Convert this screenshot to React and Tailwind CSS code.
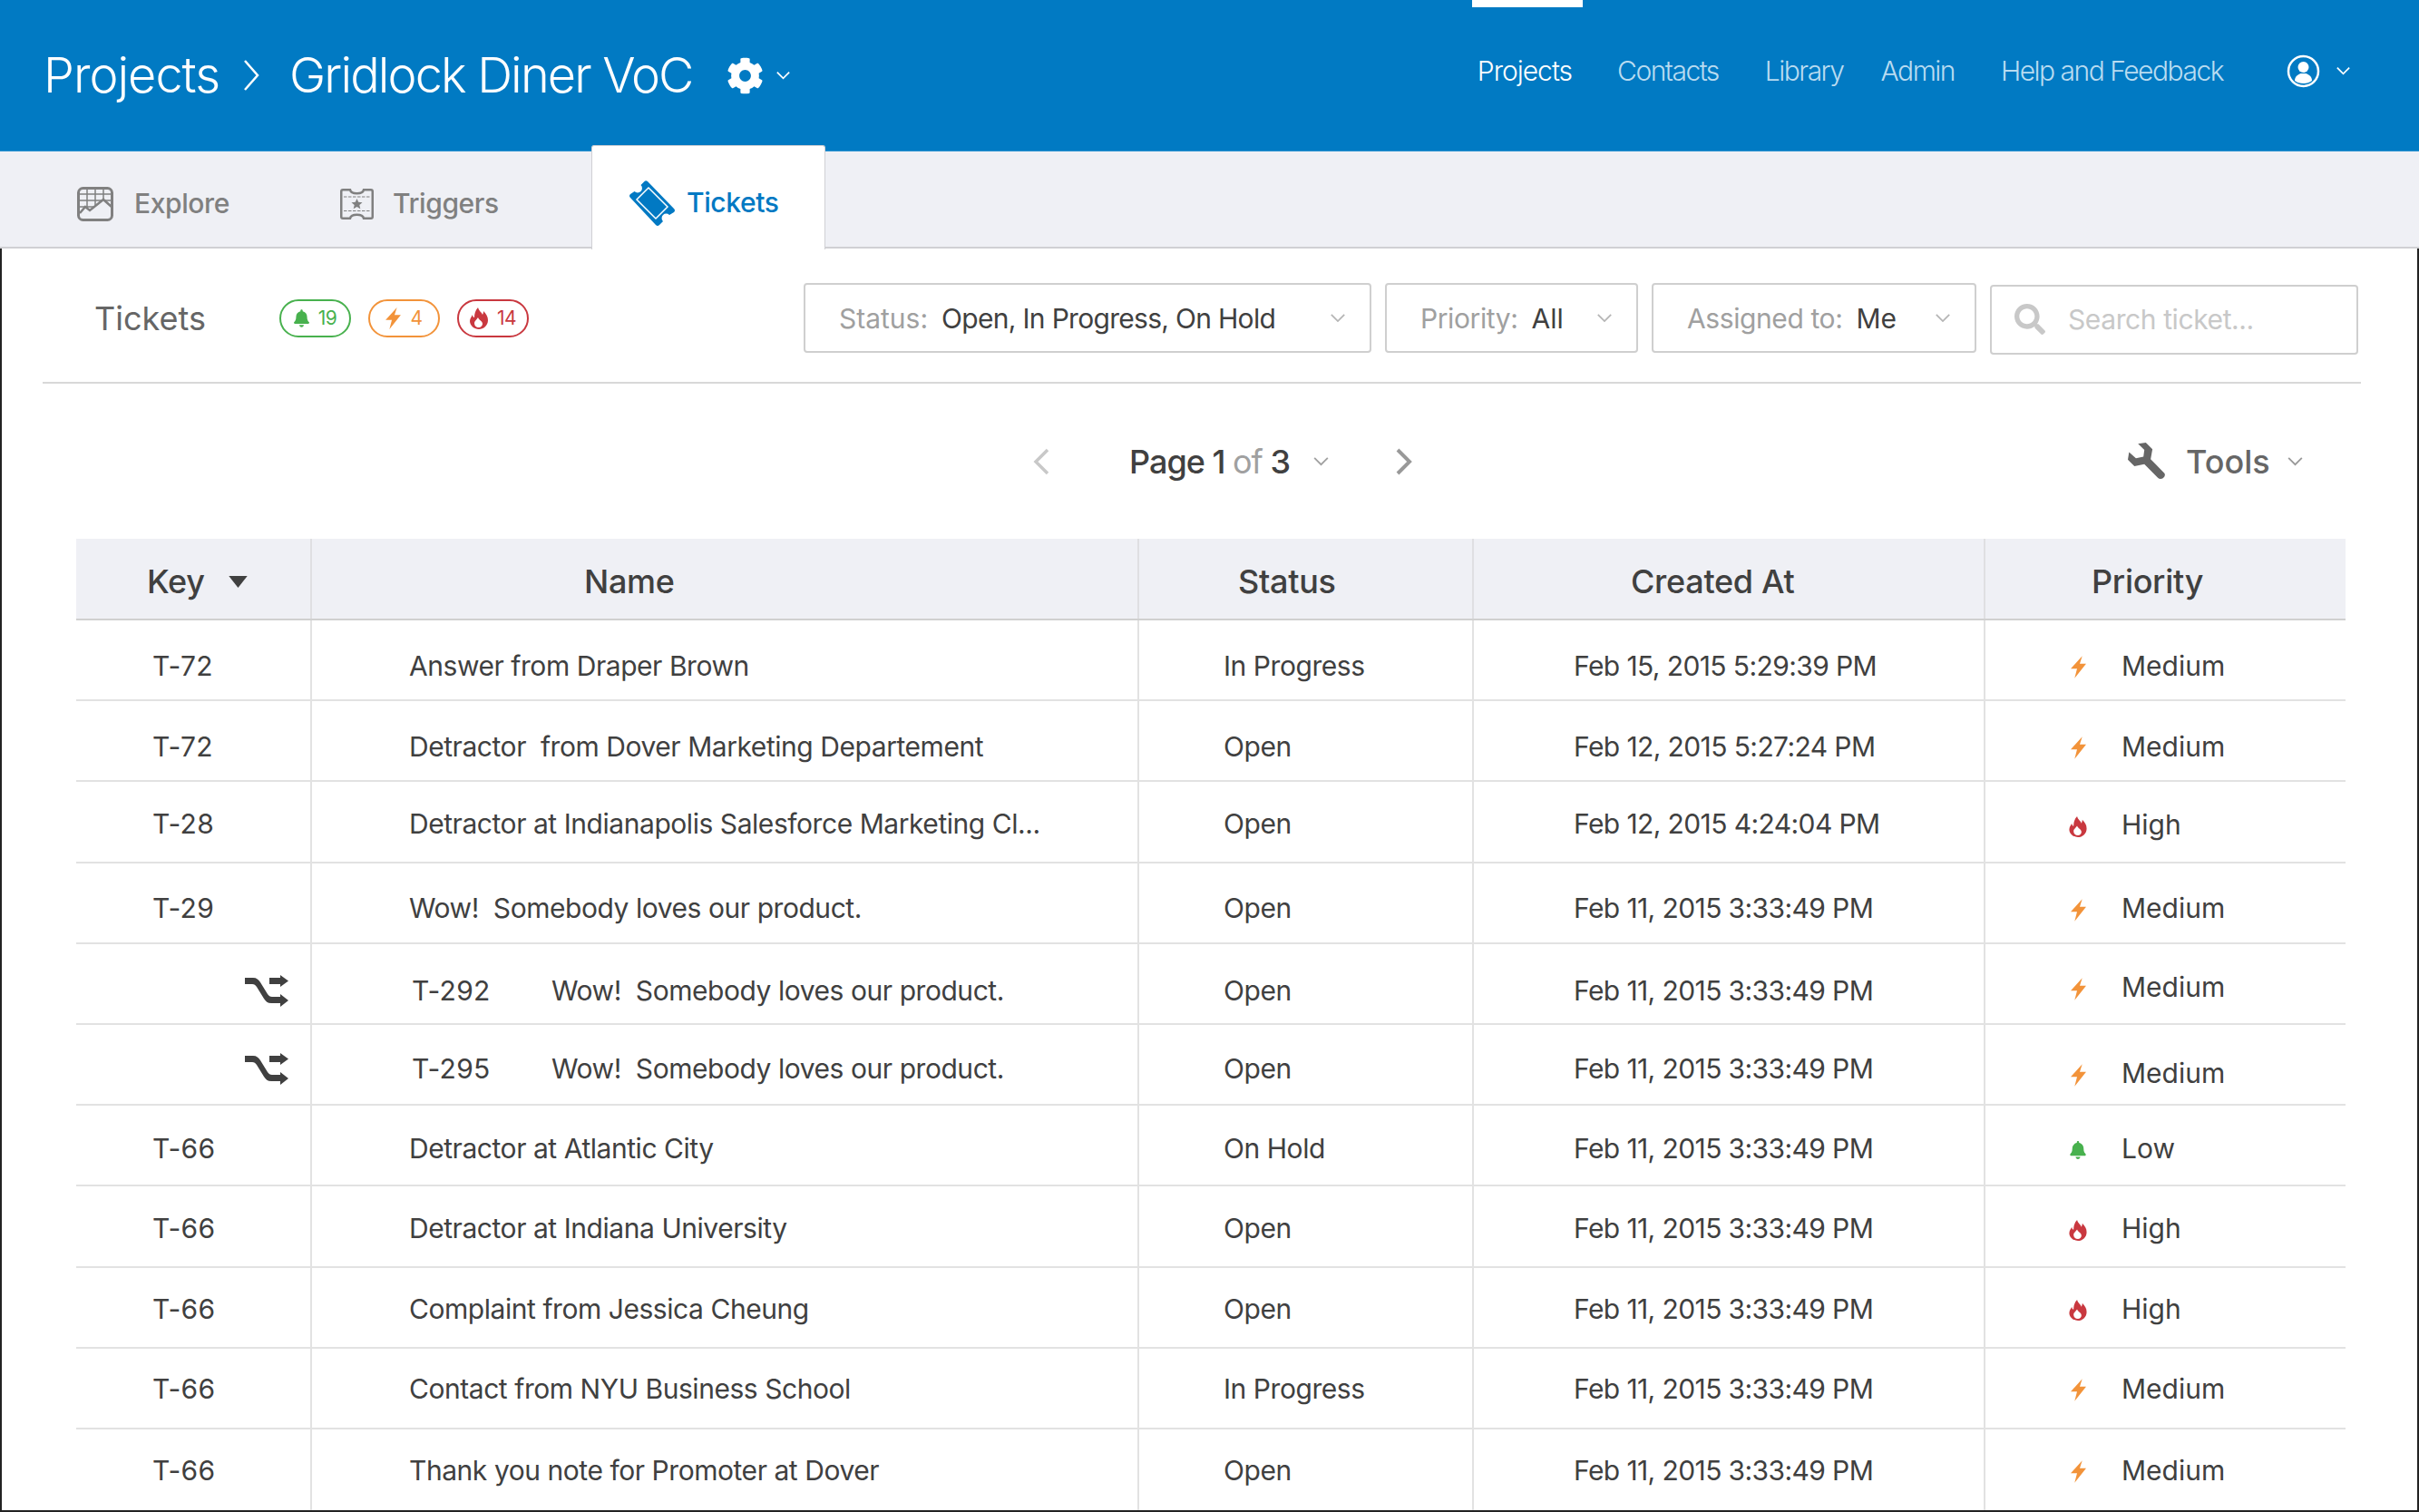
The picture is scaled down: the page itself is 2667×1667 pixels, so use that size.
import { FaBell, FaCog, FaSearch } from 'react-icons/fa'

const rows = [
  { key: 'T-72', name: 'Answer from Draper Brown', status: 'In Progress', created: 'Feb 15, 2015 5:29:39 PM', priority: 'Medium', pad: 'pt-[13px]', prioPad: 'pt-[13px]' },
  { key: 'T-72', name: 'Detractor\u00a0 from Dover Marketing Departement', status: 'Open', created: 'Feb 12, 2015 5:27:24 PM', priority: 'Medium', pad: 'pt-[13px]', prioPad: 'pt-[13px]' },
  { key: 'T-28', name: 'Detractor at Indianapolis Salesforce Marketing Cl...', status: 'Open', created: 'Feb 12, 2015 4:24:04 PM', priority: 'High', pad: 'pt-[6px]', prioPad: 'pt-[8px]' },
  { key: 'T-29', name: 'Wow!\u00a0 Somebody loves our product.', status: 'Open', created: 'Feb 11, 2015 3:33:49 PM', priority: 'Medium', pad: 'pt-[13px]', prioPad: 'pt-[13px]' },
  { child: 'T-292', name: 'Wow!\u00a0 Somebody loves our product.', status: 'Open', created: 'Feb 11, 2015 3:33:49 PM', priority: 'Medium', pad: 'pt-[16px]', prioPad: 'pt-[9px]' },
  { child: 'T-295', name: 'Wow!\u00a0 Somebody loves our product.', status: 'Open', created: 'Feb 11, 2015 3:33:49 PM', priority: 'Medium', pad: 'pt-[9px]', prioPad: 'pt-[20px]' },
  { key: 'T-66', name: 'Detractor at Atlantic City', status: 'On Hold', created: 'Feb 11, 2015 3:33:49 PM', priority: 'Low', pad: 'pt-[7px]', prioPad: 'pt-[7px]' },
  { key: 'T-66', name: 'Detractor at Indiana University', status: 'Open', created: 'Feb 11, 2015 3:33:49 PM', priority: 'High', pad: 'pt-[6px]', prioPad: 'pt-[6px]' },
  { key: 'T-66', name: 'Complaint from Jessica Cheung', status: 'Open', created: 'Feb 11, 2015 3:33:49 PM', priority: 'High', pad: 'pt-[4px]', prioPad: 'pt-[4px]' },
  { key: 'T-66', name: 'Contact from NYU Business School', status: 'In Progress', created: 'Feb 11, 2015 3:33:49 PM', priority: 'Medium', pad: 'pt-[2px]', prioPad: 'pt-[2px]' },
  { key: 'T-66', name: 'Thank you note for Promoter at Dover', status: 'Open', created: 'Feb 11, 2015 3:33:49 PM', priority: 'Medium', pad: 'pt-[2px]', prioPad: 'pt-[2px]' },
]

function Chevron({ className }) {
  return (
    <svg viewBox="0 0 20 12" className={className} fill="none" stroke="currentColor" strokeWidth="2">
      <path d="M2 2l8 8 8-8" />
    </svg>
  )
}

function Bolt({ className }) {
  return (
    <svg viewBox="0 0 17 24.300" className={className} fill="currentColor">
      <path d="M12.700 0L0 14h7L4.300 24.300 17 8.300h-7z" />
    </svg>
  )
}

function Flame({ className }) {
  return (
    <svg viewBox="0 0 20 24" className={className} fill="currentColor">
      <path
        fillRule="evenodd"
        d="M9 0c1 4 4 5 5 8 1-2 1-3 1-4 3 3 5 6 5 10 0 6-5 10-10 10S0 20 0 15c0-3 2-5 3-7 0 2 1 3 2 3 0-4 1-8 4-11zM10 22c-3 0-5-2-5-5 0-2 2-3 4-6 1 3 5 4 5 7 0 2-2 4-4 4z"
      />
    </svg>
  )
}

function Wrench({ className }) {
  return (
    <svg viewBox="48 48 127 124" className={className} fill="currentColor">
      <path d="M82 52l26-4 22 22-6 33 46 47q5 10-5 17-10 5-17-2l-45-45-33 7-22-22 4-25 23 20 25-5 3-23z" />
    </svg>
  )
}

function Shuffle() {
  return (
    <svg viewBox="0 0 48 35" className="w-[48px] h-[35px] text-[#404040]" fill="currentColor">
      <path d="M0 3h9c4 0 6 2 8 5l8 13c1.500 2 2.500 3 5 3h9v7H29c-4 0-6-2-8-5L13 13c-1.500-2-2.500-3-5-3H0z" />
      <path d="M27 3h12V0l9 6.500-9 6.500V10H27z" />
      <path d="M39 21l9 7-9 7z" />
    </svg>
  )
}

function ExploreIcon() {
  return (
    <svg viewBox="0 0 40 38" className="w-[40px] h-[38px] text-[#808080]" fill="none" stroke="currentColor">
      <path d="M2 8h36M2 15h36M2 22h36M11 2v24M20 2v20M29 2v14" strokeWidth="1.500" />
      <path d="M3 29l6-7 5 4 15-12 9 8v13H3z" fill="#eff0f5" stroke="none" />
      <path d="M3 29l6-7 5 4 15-12 9 8" strokeWidth="2.500" />
      <rect x="1.500" y="1.500" width="37" height="35" rx="5" strokeWidth="3" />
    </svg>
  )
}

function TriggersIcon() {
  return (
    <svg viewBox="0 0 37 34" className="w-[37px] h-[34px] text-[#808080]" fill="none" stroke="currentColor">
      <path d="M3 1.250h8c.500 2.500 3 4 7.500 4s7-1.500 7.500-4h8A1.750 1.750 0 0135.750 3v28A1.750 1.750 0 0134 32.750h-8c-.500-2.500-3-4-7.500-4s-7 1.500-7.500 4H3A1.750 1.750 0 011.250 31V3A1.750 1.750 0 013 1.250z" strokeWidth="2.500" />
      <path d="M4 9h29M4 24.500h29" strokeWidth="1" strokeDasharray="3.500 1.500" />
      <path d="M18.500 11l1.700 3.800 4.300.4-3.200 2.800 1 4.200-3.800-2.200-3.800 2.200 1-4.200-3.200-2.800 4.300-.4z" fill="currentColor" stroke="none" />
    </svg>
  )
}

function TicketsIcon() {
  return (
    <svg viewBox="0 0 50 50" className="w-[50px] h-[50px] text-[#0179c3]">
      <path d="M20 1l29 30q2 2 0 4l-5 3a4.500 4.500 0 00-7 7l-4 4q-2 2-4 0L1 19q-2-2 0-4l4.500-3a4.500 4.500 0 007-7L16 1.500q2-2 4-.500z" fill="currentColor" />
      <path d="M21 8l21 21-13 13L8 21z" fill="none" stroke="#fff" strokeWidth="1.500" />
    </svg>
  )
}

function UserIcon() {
  return (
    <svg viewBox="0 0 37 37" className="w-[37px] h-[37px] text-white">
      <circle cx="18.500" cy="18.500" r="16.500" fill="none" stroke="currentColor" strokeWidth="2.500" />
      <circle cx="18.500" cy="14" r="6" fill="currentColor" />
      <path d="M9 29c0-5 4-7 6.500-8h6c2.500 1 6.500 3 6.500 8-2.500 2-6 3-9.500 3S11.500 31 9 29z" fill="currentColor" />
    </svg>
  )
}

function PriorityIcon({ priority }) {
  if (priority === 'Low') return <FaBell className="w-[18px] h-[20px] text-[#48b14e]" />
  if (priority === 'High') return <Flame className="w-[20px] h-[23px] text-[#c9383f]" />
  return <Bolt className="w-[17px] h-[25px] text-[#f2933a]" />
}

function Pill({ color, icon, count }) {
  return (
    <div className={`flex items-center justify-center gap-[10px] w-[79px] h-[42px] rounded-[21px] border-2 text-[21px] tracking-[-0.5px] ${color}`}>
      {icon}
      <span>{count}</span>
    </div>
  )
}

function Filter({ label, value, width, labelClass, valueClass }) {
  return (
    <div className={`flex items-center justify-between h-[77px] pl-[37px] pr-[26px] border-2 border-[#cfcfcf] rounded-[4px] text-[30px] ${width}`}>
      <div className="whitespace-nowrap pt-[3px]">
        <span className={`text-[#a0a0a0] ${labelClass}`}>{label}:</span>
        <span className={`ml-[15px] text-[#404040] ${valueClass}`}>{value}</span>
      </div>
      <Chevron className="w-[18px] h-[11px] text-[#b5b5b5]" />
    </div>
  )
}

function App() {
  return (
    <div className="relative w-[2667px] h-[1667px] overflow-hidden bg-white font-['Inter',sans-serif] text-[#404040]">
      <header className="flex items-center justify-between h-[167px] bg-[#017ac3] border-b border-[#2f94d0] text-white font-light">
        <div className="flex items-center pl-[48px] text-[54px] leading-none">
          <span className="tracking-[-1px]">Projects</span>
          <svg viewBox="0 0 18 36" className="w-[18px] h-[36px] ml-[26px] mr-[33px]" fill="none" stroke="currentColor" strokeWidth="2.500"><path d="M2 2l14 16L2 34" /></svg>
          <span className="tracking-[-1.850px]">Gridlock Diner VoC</span>
          <FaCog className="w-[41px] h-[41px] ml-[37px]" />
          <Chevron className="w-[17px] h-[10px] ml-[13px]" />
        </div>
        <nav className="relative flex items-center text-[30px] tracking-[-1.500px] text-[#b9dcf1] pr-[75px] pb-[10px]">
          <div className="absolute left-[-6px] top-[-57px] w-[122px] h-[9px] bg-white" />
          <span className="text-white mr-[50px] tracking-[-1px]">Projects</span>
          <span className="mr-[51px]">Contacts</span>
          <span className="mr-[41px]">Library</span>
          <span className="mr-[51px]">Admin</span>
          <span className="mr-[70px]">Help and Feedback</span>
          <UserIcon />
          <Chevron className="w-[17px] h-[10px] ml-[17px] text-white" />
        </nav>
      </header>

      <div className="flex h-[107px] bg-[#eff0f5] border-b-2 border-[#d0d0d4] text-[30px] font-medium text-[#808080] tracking-[-0.400px]">
        <div className="flex items-center gap-[23px] pl-[85px] pt-[10px] w-[375px]">
          <ExploreIcon />
          <span>Explore</span>
        </div>
        <div className="flex items-center gap-[21px] pt-[10px] w-[277px]">
          <TriggersIcon />
          <span>Triggers</span>
        </div>
        <div className="relative flex items-center gap-[13px] w-[258px] h-[115px] mt-[-7px] pl-[41px] pt-[11px] bg-white border-x border-t border-[#d0d0d4] rounded-t-[3px] text-[#0179c3]">
          <TicketsIcon />
          <span>Tickets</span>
        </div>
      </div>

      <main className="h-[1393px] border-x-2 border-b-2 border-[#222]">
        <div className="flex items-center h-[149px] pt-[7px] ml-[45px] mr-[62px] border-b-2 border-[#d8d8d8]">
          <span className="ml-[57px] w-[204px] text-[36px] text-[#666]">Tickets</span>
          <div className="flex gap-[19px] w-[578px]">
            <Pill color="border-[#48b14e] text-[#48b14e]" count="19" icon={<FaBell className="w-[17px] h-[20px]" />} />
            <Pill color="border-[#f2933a] text-[#f2933a]" count="4" icon={<Bolt className="w-[17px] h-[24px]" />} />
            <Pill color="border-[#c9383f] text-[#c9383f]" count="14" icon={<Flame className="w-[20px] h-[24px]" />} />
          </div>
          <div className="flex gap-[15px]">
            <Filter label="Status" value="Open, In Progress, On Hold" width="w-[626px]" labelClass="" valueClass="tracking-[-0.700px]" />
            <Filter label="Priority" value="All" width="w-[279px]" labelClass="tracking-[-0.400px]" valueClass="" />
            <Filter label="Assigned to" value="Me" width="w-[358px]" labelClass="tracking-[-0.400px]" valueClass="" />
            <div className="flex items-center gap-[25px] w-[406px] h-[77px] mt-[2px] pl-[25px] border-2 border-[#cfcfcf] rounded-[4px] text-[30px] tracking-[-0.400px] text-[#c8c8c8]">
              <FaSearch className="w-[34px] h-[34px] text-[#c8c8c8]" />
              <span>Search ticket...</span>
            </div>
          </div>
        </div>

        <div className="relative flex items-center h-[171px] text-[36px]">
          <svg viewBox="0 0 18 30" className="w-[18px] h-[30px] ml-[1137px] text-[#c8c8c8]" fill="none" stroke="currentColor" strokeWidth="3.500"><path d="M16 2L3 15l13 13" /></svg>
          <div className="ml-[88px] font-medium whitespace-nowrap tracking-[-1px]">
            Page 1 <span className="text-[#a0a0a0] font-normal">of</span> 3
          </div>
          <Chevron className="w-[19px] h-[11px] ml-[25px] text-[#a0a0a0]" />
          <svg viewBox="0 0 18 30" className="w-[18px] h-[30px] ml-[73px] text-[#999]" fill="none" stroke="currentColor" strokeWidth="4"><path d="M2 2l13 13L2 28" /></svg>
          <Wrench className="w-[42px] h-[41px] ml-[789px] text-[#666]" />
          <span className="ml-[22px] text-[#666] font-medium">Tools</span>
          <Chevron className="w-[19px] h-[11px] ml-[18px] text-[#999]" />
        </div>

        <div className="ml-[82px] w-[2502px]">
          <div className="grid grid-cols-[258px_912px_369px_564px_399px] h-[90px] bg-[#eff0f5] border-b-2 border-[#d0d0d0] text-[36px] font-medium tracking-[-0.300px]">
            <div className="flex items-center pl-[78px] pt-[6px]">
              Key
              <svg viewBox="0 0 22 14" className="w-[21px] h-[13px] ml-[26px]" fill="currentColor"><path d="M0 0h22L11 14z" /></svg>
            </div>
            <div className="flex items-center pl-[300px] pt-[6px] border-l-2 border-[#dfdfe2]">Name</div>
            <div className="flex items-center pl-[109px] pt-[6px] border-l-2 border-[#dfdfe2]">Status</div>
            <div className="flex items-center pl-[173px] pt-[6px] border-l-2 border-[#dfdfe2]">Created At</div>
            <div className="flex items-center pl-[117px] pt-[6px] border-l-2 border-[#dfdfe2]">Priority</div>
          </div>
          {rows.map((row, i) => (
            <div key={i} className={`grid grid-cols-[258px_912px_369px_564px_399px] h-[89.2px] text-[30px] ${i < rows.length - 1 ? 'border-b-2 border-[#e2e2e2]' : ''}`}>
              {row.child ? (
                <div className={`flex items-center justify-end pr-[24px] ${row.pad}`}><Shuffle /></div>
              ) : (
                <div className={`flex items-center pl-[84px] tracking-[0.3px] ${row.pad}`}>{row.key}</div>
              )}
              <div className={`flex items-center pl-[107px] border-l-2 border-[#e2e2e2] whitespace-nowrap tracking-[-0.450px] ${row.pad}`}>
                {row.child && <span className="w-[154px] ml-[3px] tracking-[0.3px]">{row.child}</span>}
                <span>{row.name}</span>
              </div>
              <div className={`flex items-center pl-[93px] border-l-2 border-[#e2e2e2] tracking-[-0.450px] ${row.pad}`}>{row.status}</div>
              <div className={`flex items-center pl-[110px] border-l-2 border-[#e2e2e2] tracking-[-0.600px] ${row.pad}`}>{row.created}</div>
              <div className={`flex items-center border-l-2 border-[#e2e2e2] ${row.prioPad}`}>
                <div className="flex justify-center w-[20px] ml-[92px] mr-[38px] mt-[3px]"><PriorityIcon priority={row.priority} /></div>
                <span>{row.priority}</span>
              </div>
            </div>
          ))}
        </div>
      </main>
    </div>
  )
}

export default App
